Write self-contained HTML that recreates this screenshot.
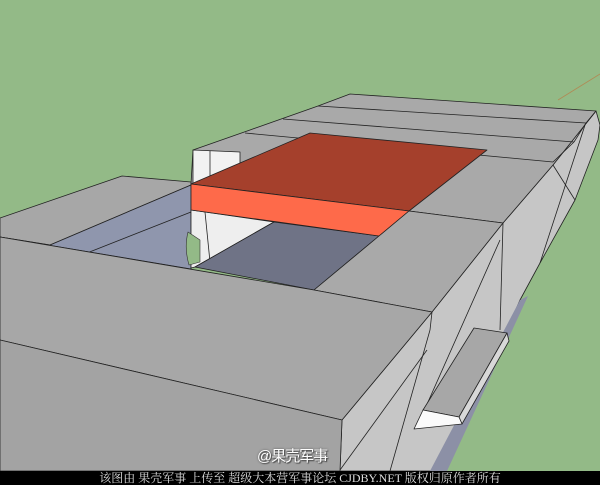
<!DOCTYPE html>
<html><head><meta charset="utf-8"><style>
html,body{margin:0;padding:0;width:600px;height:485px;overflow:hidden;background:#93ba87}
svg{position:absolute;left:0;top:0}
.wm{position:absolute;left:257px;top:445px;font:15px "Liberation Sans","Noto Sans CJK SC",sans-serif;color:#fff;text-shadow:0 0 2px #555,1px 1px 1px #444;letter-spacing:-1px}
.bar{position:absolute;left:0;top:471px;width:600px;height:14px;background:#000;color:#ddd;font:12px/14px "Liberation Serif","Noto Serif CJK SC",serif;text-align:center;white-space:nowrap}
</style></head><body>
<svg width="600" height="485" viewBox="0 0 600 485" stroke="#222" stroke-width="0.8" stroke-linejoin="round">
<line x1="558" y1="100" x2="600" y2="74" stroke="#b08a55" stroke-width="0.8"/>
<!-- hull side -->
<polygon points="596,111 600,125 598,140 575,200 540,263 520,300 445,471 340,471 342,420 432,312 503,223 553,165" fill="#c6c6c6"/>
<polygon points="520,300 528,296 447,471 430,471" fill="#8c90a6" stroke="none"/>
<line x1="553" y1="165" x2="575" y2="200" /><line x1="585" y1="125" x2="540" y2="263"/>
<line x1="503" y1="223" x2="500" y2="330"/><line x1="432" y1="312" x2="430" y2="330"/>
<line x1="427" y1="350" x2="340" y2="470"/><line x1="430" y1="330" x2="390" y2="471"/>
<line x1="500" y1="240" x2="420" y2="420"/>
<!-- back deck -->
<polygon points="193,150 250,130 318,106 350,94 596,111 553,165 503,223 409,211 191,184" fill="#a9a9a9"/>
<line x1="318" y1="106" x2="586" y2="123"/><line x1="283" y1="119" x2="574" y2="142"/>
<line x1="245" y1="133" x2="553" y2="162"/>
<line x1="586" y1="123" x2="596" y2="111"/><line x1="574" y1="142" x2="586" y2="123"/><line x1="553" y1="162" x2="574" y2="142"/>
<!-- white structure -->
<polygon points="193,150 240,152 240,184 193,184" fill="#f2f2f2"/>
<line x1="210" y1="151" x2="210" y2="184"/>
<!-- left deck -->
<polygon points="0,218 122,176 191,182 191,185 50,245 0,237" fill="#a7a7a7"/>
<!-- hole -->
<polygon points="50,245 191,185 191,269 0,237" fill="#8f96ad"/>
<line x1="87" y1="253" x2="191" y2="212"/>
<polygon points="191,210 274,222 195,267 191,268" fill="#eeeeee"/>
<path d="M188,232 Q184,248 189,265 L200,262 L200,240 Z" fill="#93ba87" stroke="#333" stroke-width="0.6"/>
<line x1="205" y1="212" x2="210" y2="262"/>
<polygon points="195,267 274,222 379,236 314,290" fill="#6f7386"/>
<!-- red -->
<polygon points="310,133 487,150 409,211 191,184" fill="#a5402c"/>
<polygon points="191,184 409,211 379,236 191,210" fill="#fe6a4a"/>
<!-- right deck front part -->
<polygon points="379,236 409,211 503,223 432,312 314,290" fill="#a9a9a9"/>
<!-- front deck -->
<polygon points="0,237 314,290 432,312 342,420 0,340" fill="#a7a7a7"/>
<polygon points="0,340 342,420 340,471 0,471" fill="#a3a3a3"/>
<!-- sponson -->
<polygon points="474,328 507,333 459,417 423,410" fill="#a7a7a7"/>
<polygon points="507,333 509,341 462,424 459,417" fill="#d8d8d8"/>
<polygon points="423,410 459,417 462,424 414,429" fill="#fafafa"/>
</svg>
<div class="wm">@果壳军事</div>
<div class="bar">该图由 果壳军事 上传至 超级大本营军事论坛 CJDBY.NET 版权归原作者所有</div>
</body></html>
